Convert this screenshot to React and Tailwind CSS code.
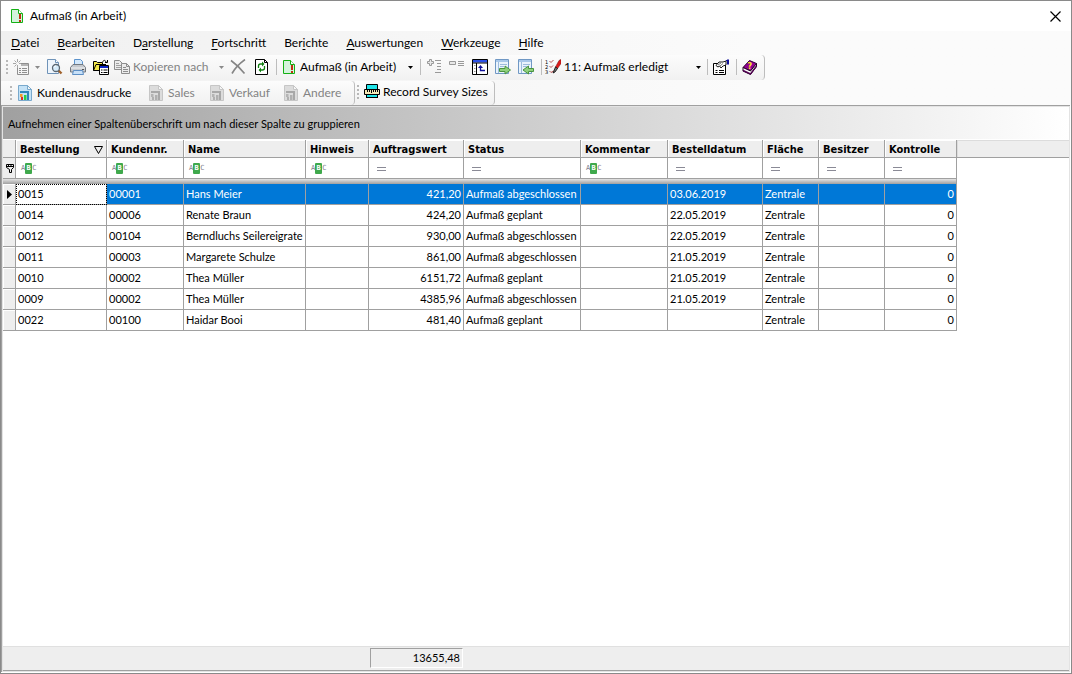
import { useState } from 'react';
import clsx from 'clsx';

const menus = [
  ['', 'D', 'atei'],
  ['', 'B', 'earbeiten'],
  ['D', 'a', 'rstellung'],
  ['', 'F', 'ortschritt'],
  ['Ber', 'i', 'chte'],
  ['', 'A', 'uswertungen'],
  ['', 'W', 'erkzeuge'],
  ['', 'H', 'ilfe'],
];

const columns = [
  { key: 'order', label: 'Bestellung', width: 'w-[91px]', filter: 'text', sorted: true },
  { key: 'customer', label: 'Kundennr.', width: 'w-[77px]', filter: 'text' },
  { key: 'name', label: 'Name', width: 'w-[122px]', filter: 'text' },
  { key: 'hint', label: 'Hinweis', width: 'w-[63px]', filter: 'text' },
  { key: 'value', label: 'Auftragswert', width: 'w-[95px]', filter: 'equal', right: true },
  { key: 'status', label: 'Status', width: 'w-[117px]', filter: 'equal' },
  { key: 'comment', label: 'Kommentar', width: 'w-[87px]', filter: 'text' },
  { key: 'date', label: 'Bestelldatum', width: 'w-[95px]', filter: 'equal' },
  { key: 'area', label: 'Fläche', width: 'w-[56px]', filter: 'equal' },
  { key: 'owner', label: 'Besitzer', width: 'w-[66px]', filter: 'equal' },
  { key: 'control', label: 'Kontrolle', width: 'w-[72px]', filter: 'equal', right: true },
];

const rows = [
  { order: '0015', customer: '00001', name: 'Hans Meier', value: '421,20', status: 'Aufmaß abgeschlossen', date: '03.06.2019', area: 'Zentrale', control: '0' },
  { order: '0014', customer: '00006', name: 'Renate Braun', value: '424,20', status: 'Aufmaß geplant', date: '22.05.2019', area: 'Zentrale', control: '0' },
  { order: '0012', customer: '00104', name: 'Berndluchs Seilereigrate', value: '930,00', status: 'Aufmaß abgeschlossen', date: '22.05.2019', area: 'Zentrale', control: '0' },
  { order: '0011', customer: '00003', name: 'Margarete Schulze', value: '861,00', status: 'Aufmaß abgeschlossen', date: '21.05.2019', area: 'Zentrale', control: '0' },
  { order: '0010', customer: '00002', name: 'Thea Müller', value: '6151,72', status: 'Aufmaß geplant', date: '21.05.2019', area: 'Zentrale', control: '0' },
  { order: '0009', customer: '00002', name: 'Thea Müller', value: '4385,96', status: 'Aufmaß abgeschlossen', date: '21.05.2019', area: 'Zentrale', control: '0' },
  { order: '0022', customer: '00100', name: 'Haidar Booi', value: '481,40', status: 'Aufmaß geplant', date: '', area: 'Zentrale', control: '0' },
];

function Icon({ children, className = 'size-4' }) {
  return (
    <svg viewBox="0 0 16 16" className={clsx('shrink-0', className)} fill="none" aria-hidden="true">
      {children}
    </svg>
  );
}

function PageIcon() {
  return (
    <Icon>
      <path d="M2.500 1.500h7l4 4v9h-11z" fill="#d4f3dc" stroke="#14b014" />
      <path d="M9.500 1.500v4h4" fill="#fff" stroke="#14b014" />
      <path d="M10 6h2v5h-2zM10 12h2v2h-2z" fill="#c03010" />
    </Icon>
  );
}

function NewIcon() {
  return (
    <Icon>
      <path d="M4.500 0v3M4.500 6v3M0 4.500h3M6 4.500h2M1.500 1.500l2 2M7.500 1.500l-2 2M1.500 7.500l2-2" stroke="#a6a6a6" />
      <path d="M8 4.500h7.500v11h-11V9" stroke="#8f8f8f" />
      <path d="M8 5h7v2H8z" fill="#b5b5b5" />
      <path d="M6 9.500h2M9 9.500h5M6 11.500h2M9 11.500h5M6 13.500h2M9 13.500h5" stroke="#8f8f8f" />
    </Icon>
  );
}

function PreviewIcon() {
  return (
    <Icon>
      <path d="M.5 .5h8l3 3v11H.5z" fill="#eef5fc" stroke="#6f93b8" />
      <path d="M8.500 .5v3h3" fill="#fff" stroke="#6f93b8" />
      <path d="M11.500 11.500l3 3" stroke="#a0622c" strokeWidth="2.4" />
      <circle cx="9" cy="9" r="3.500" fill="#d5ebfa" stroke="#5b6772" strokeWidth="1.3" />
      <path d="M7 8.500a2 2 0 0 1 2-1.6" stroke="#fff" />
    </Icon>
  );
}

function PrinterIcon() {
  return (
    <Icon>
      <path d="M4.500 6V.5h6l2 2V6" fill="#d3e8fb" stroke="#5c93cc" />
      <path d="M3 5.500h10l2.500 3v4.500H.5V8.500z" fill="#c5c9ce" stroke="#737980" />
      <path d="M1 9h14" stroke="#f4f5f6" />
      <path d="M3.500 11.500h9l1 4h-11z" fill="#c7e0f8" stroke="#5c8ec4" />
      <path d="M12 10.500h2" stroke="#555" />
    </Icon>
  );
}

function FolderListIcon() {
  return (
    <Icon>
      <path d="M9.500 2.500q2-2.500 4 .500M12 3.500h2.500V1" stroke="#000" />
      <path d="M.5 11.500v-9h3l1 1h5v2h3v6z" fill="#f4e84a" stroke="#000" />
      <path d="M.5 11.500l2.500-6h10" stroke="#000" />
      <path d="M6.500 6.500h9v9h-9z" fill="#fff" stroke="#000" />
      <path d="M7 7h8v2H7z" fill="#0a24c8" />
      <path d="M8 11h1.500M10.500 11h4M8 13.500h1.500M10.500 13.500h4" stroke="#000" />
    </Icon>
  );
}

function CopyIcon() {
  return (
    <Icon>
      <path d="M.5 1.500h5l3 3v6h-8z" fill="#ececec" stroke="#8d8d8d" />
      <path d="M2 4.500h3M2 6.500h5M2 8.500h5" stroke="#a0a0a0" />
      <path d="M7.500 4.500h5l3 3v7h-8z" fill="#ececec" stroke="#8d8d8d" />
      <path d="M12.500 4.500v3h3M9 8.500h3M9 10.500h5M9 12.500h5" stroke="#8d8d8d" />
    </Icon>
  );
}

function DeleteIcon() {
  return (
    <Icon>
      <path d="M1 1.500q7 5 13.500 13M15 .5Q6 7 2 14.500" stroke="#858585" strokeWidth="1.6" />
    </Icon>
  );
}

function RefreshIcon() {
  return (
    <Icon>
      <path d="M2.500 .5h9l3 3v12h-12z" fill="#fff" stroke="#000" />
      <path d="M11.500 .5v3h3" stroke="#000" />
      <path d="M5.500 9V7q0-2 2-2H10M11.500 7v2q0 2-2 2H7" stroke="#118011" strokeWidth="1.300" />
      <path d="M9 2.500L11.500 5 9 7.500zM8 8.500L5.500 11 8 13.500z" fill="#118011" />
    </Icon>
  );
}

function ExpandIcon() {
  return (
    <Icon>
      <path d="M3.500 .5h2v2h2v2h-2v2h-2v-2h-2v-2h2z" fill="#e8e8e8" stroke="#999" />
      <path d="M9 1.500h6M11 4.500h4M11 7.500h4M11 10.500h4M9 13.500h6" stroke="#999" />
    </Icon>
  );
}

function CollapseIcon() {
  return (
    <Icon>
      <path d="M.5 2.500h6v3h-6z" fill="#e8e8e8" stroke="#999" />
      <path d="M9 2.500h6M9 4.500h6M9 6.500h6" stroke="#999" />
    </Icon>
  );
}

function WindowUpIcon() {
  return (
    <Icon>
      <path d="M.5 .5h15v15H.5z" fill="#fff" stroke="#000" />
      <path d="M1 1h14v2.500H1z" fill="#2b50e8" />
      <path d="M0 4h16M4.500 4v11" stroke="#000" />
      <path d="M2 6.500h1.500M2 9.500h1.500M2 12.500h1.500" stroke="#999" />
      <path d="M8.500 8v3.500H13" stroke="#10109a" strokeWidth="1.300" />
      <path d="M6 9l2.500-3L11 9z" fill="#10109a" />
    </Icon>
  );
}

function TransferIcon({ back }) {
  return (
    <Icon>
      <path d="M.5 .5h13v14H.5z" fill="#eaf3fc" stroke="#7098c4" />
      <path d="M1 1h12v2H1z" fill="#a9c8ea" />
      <path d="M3.500 3v11" stroke="#9dbcdc" />
      <path d="M5 5.500h7M5 7.500h4" stroke="#9dbcdc" />
      {back ? (
        <path d="M15.500 9.500h-5V7l-5.500 4 5.500 4v-2.500h5z" fill="#8fd07c" stroke="#4a9440" />
      ) : (
        <path d="M4.500 9.500h5.500V7l5.500 4-5.500 4v-2.500H4.500z" fill="#8fd07c" stroke="#4a9440" />
      )}
    </Icon>
  );
}

function StepsIcon() {
  return (
    <Icon>
      <g fill="#000" fontFamily="DejaVu Sans" fontSize="5">
        <text x="0" y="5">1</text>
        <text x="0" y="10">2</text>
        <text x="0" y="15">3</text>
      </g>
      <path d="M4.500 2L6 3.500 8.500 1M4.500 7L6 8.500 8 6.500M4.500 12L6 13.500 8.500 12" stroke="#b04040" strokeWidth=".9" />
      <path d="M10.500 8L14 1.500 16 .5v4l-3.500 5z" fill="#e01818" stroke="#802020" strokeWidth=".6" />
      <path d="M10.500 8l2 1.500-2.500 3.500L8 14z" fill="#777" stroke="#000" strokeWidth=".8" />
    </Icon>
  );
}

function PropertiesIcon() {
  return (
    <Icon>
      <path d="M.5 4.500h12v11H.5z" fill="#fff" stroke="#000" />
      <path d="M2.500 11.500h2M6 11.500h5M2.500 13.500h2M6 13.500h5" stroke="#000" />
      <path d="M3 6.500L6 3h4l3-1v4l-3 1-2 2-1.500-2L5 8z" fill="#fff" stroke="#000" strokeWidth=".9" />
      <path d="M5 6l3-2M7 7l3-2.500" stroke="#555" strokeWidth=".8" />
      <path d="M14 .5h2v5h-2zM13 1h1v1h-1z" fill="#10109a" />
    </Icon>
  );
}

function BookIcon() {
  return (
    <Icon>
      <path d="M1 8.500L7.500 1.500l7 3-6 7.500z" fill="#900090" stroke="#300030" />
      <path d="M1 8.500v3.500l7.500 3.500 6-8V4.500l-6 7.500z" fill="#fff" stroke="#200020" />
      <path d="M1 11.500l7.500 3.500 6-8" stroke="#500050" strokeWidth="1.400" />
      <text x="5.500" y="9.500" fill="#ffea20" fontSize="8" fontWeight="bold" fontFamily="DejaVu Sans">?</text>
    </Icon>
  );
}

function ReportIcon({ disabled }) {
  return (
    <Icon>
      <path
        d="M1.500 .5h9l4 4v11h-13z"
        fill={disabled ? '#dcdcdc' : '#c4e2f6'}
        stroke={disabled ? '#c6c6c6' : '#79a9cc'}
      />
      <path d="M10.500 .5v4h4z" fill="#f6f6f6" stroke={disabled ? '#c6c6c6' : '#79a9cc'} />
      <path d="M3 8V6h9v9h-2V8z" fill={disabled ? '#a8a8a8' : '#2e86bd'} />
      <path d="M3 9h2.500v3H3z" fill={disabled ? '#b4b4b4' : '#f29a28'} />
      <path d="M4 12h2v3H4z" fill={disabled ? '#b0b0b0' : '#e03020'} />
      <path d="M7 10h2.500v5H7z" fill={disabled ? '#b0b0b0' : '#28d048'} />
    </Icon>
  );
}

function RulerIcon() {
  return (
    <Icon>
      <path d="M2.500 .5h11v5h-11zM2.500 10.500h11v3h-11z" fill="#20e4e8" stroke="#000" />
      <path d="M.5 5.500h15v5H.5z" fill="#f5e9b8" stroke="#000" />
      <path d="M3.500 6v2M5.500 6v2M7.500 6v3M9.500 6v2M11.500 6v2M13.500 6v2" stroke="#000" />
      <path d="M2 13.500h12" stroke="#000" />
    </Icon>
  );
}

function Arrow({ muted }) {
  return (
    <svg viewBox="0 0 5 3" className="h-[3px] w-[5px] shrink-0" aria-hidden="true">
      <path d="M0 0h5L2.500 3z" fill={muted ? '#8a8a8a' : '#000'} />
    </svg>
  );
}

function Grip() {
  return (
    <span className="flex w-2 shrink-0 flex-col gap-0.5 pl-px" aria-hidden="true">
      <span className="size-0.5 bg-[#b8b8b8]" />
      <span className="size-0.5 bg-[#b8b8b8]" />
      <span className="size-0.5 bg-[#b8b8b8]" />
      <span className="size-0.5 bg-[#b8b8b8]" />
    </span>
  );
}

function Separator() {
  return <span className="ml-1 mr-px h-4 w-px shrink-0 bg-[#bdbdbd]" />;
}

function ToolButton({ label, disabled, children }) {
  return (
    <button
      type="button"
      aria-label={label}
      disabled={disabled}
      className="flex h-6 w-[23px] shrink-0 items-center justify-center"
    >
      {children}
    </button>
  );
}

function ToolSelect({ icon, label, options, className }) {
  return (
    <label className={clsx('flex h-6 shrink-0 items-center', className)}>
      {icon}
      <select aria-label={label} className="ml-[3px] min-w-0 flex-1 appearance-none bg-transparent outline-none">
        {options.map((option) => (
          <option key={option}>{option}</option>
        ))}
      </select>
      <Arrow />
    </label>
  );
}

function ReportButton({ label, disabled, className }) {
  return (
    <button
      type="button"
      disabled={disabled}
      className={clsx('flex h-6 shrink-0 items-center gap-1 disabled:text-[#838383]', className)}
    >
      <ReportIcon disabled={disabled} />
      {label}
    </button>
  );
}

function FilterCell({ column }) {
  return (
    <label className="flex h-5 items-center overflow-hidden pl-[5px] pt-px">
      {column.filter === 'text' ? (
        <span className="flex items-center font-['DejaVu_Sans_Mono'] text-[7px] leading-[11px] text-[#7d7d8a]">
          A<span className="w-[7px] rounded-[1px] bg-[#3fa94c] text-center font-bold text-white">B</span>C
        </span>
      ) : (
        <span className="ml-[3px] h-1 w-[9px] shrink-0 border-y border-[#8a8a96]" />
      )}
      <input
        type="text"
        aria-label={`Filter ${column.label}`}
        className="ml-1 min-w-0 flex-1 bg-transparent outline-none"
      />
    </label>
  );
}

function OrderTable() {
  const [selected, setSelected] = useState('0015');

  return (
    <table className="w-full table-fixed border-separate border-spacing-0 text-left">
      <colgroup>
        <col className="w-[13px]" />
        {columns.map((column) => (
          <col key={column.key} className={column.width} />
        ))}
        <col />
      </colgroup>
      <thead>
        <tr className="h-[18px] bg-[#eee]">
          <th className="border-b border-r border-[#a0a0a0] p-0" />
          {columns.map((column) => (
            <th
              key={column.key}
              className="border-b border-r border-[#a0a0a0] p-0 font-['DejaVu_Sans_Condensed','DejaVu_Sans',sans-serif] font-bold shadow-[inset_1px_1px_0_#fff]"
            >
              <span className="flex items-center justify-between pl-1 pr-[3px] pt-0.5 leading-[15px]">
                {column.label}
                {column.sorted && (
                  <svg viewBox="0 0 9 8" className="h-2 w-[9px]" fill="none" aria-hidden="true">
                    <path d="M.5 .5h8l-4 7z" stroke="#000" />
                  </svg>
                )}
              </span>
            </th>
          ))}
          <th className="border-b border-[#a0a0a0] p-0 shadow-[inset_1px_1px_0_#dcdcdc]" />
        </tr>
        <tr className="h-[21px]">
          <td className="border-b border-r border-[#a0a0a0] bg-[#eee] p-0">
            <svg viewBox="0 0 9 9" className="ml-[3px] h-[9px] w-[9px]" fill="none" aria-hidden="true">
              <path d="M.5 .5h7v3l-2 2v3h-2v-3l-3-2zM1 2.500h6M2.500 .5v2M5 .5v2" stroke="#000" />
            </svg>
          </td>
          {columns.map((column) => (
            <td key={column.key} className="border-b border-r border-[#a0a0a0] p-0">
              <FilterCell column={column} />
            </td>
          ))}
          <td className="p-0" />
        </tr>
        <tr className="h-[5px]">
          <td
            colSpan={columns.length + 1}
            className="border-r border-[#a0a0a0] bg-linear-to-b from-[#e4e4e4] to-[#a0a0a0] p-0"
          />
          <td className="p-0" />
        </tr>
      </thead>
      <tbody>
        {rows.map((row) => {
          const active = row.order === selected;
          return (
            <tr
              key={row.order}
              onClick={() => setSelected(row.order)}
              className={clsx('h-[21px]', active && 'text-white')}
            >
              <td className="border-b border-r border-[#a0a0a0] bg-[#eee] p-0 shadow-[inset_1px_1px_0_#fff]">
                {active && (
                  <svg viewBox="0 0 5 9" className="ml-1 h-[9px] w-[5px] text-black" aria-hidden="true">
                    <path d="M0 0l5 4.500L0 9z" fill="currentColor" />
                  </svg>
                )}
              </td>
              {columns.map((column, i) => (
                <td
                  key={column.key}
                  className={clsx(
                    'whitespace-nowrap border-b border-r border-[#a0a0a0] p-0 leading-5',
                    column.right ? 'pr-0.5 text-right' : 'pl-0.5',
                    active && i > 0 && 'bg-[#0078d7]',
                    active && i === 0 && 'text-black outline-1 -outline-offset-1 outline-dotted outline-black',
                  )}
                >
                  {row[column.key]}
                </td>
              ))}
              <td className="p-0" />
            </tr>
          );
        })}
      </tbody>
    </table>
  );
}

export default function App() {
  return (
    <div className="flex h-screen flex-col overflow-hidden border border-[#8a8a8a] bg-white font-['Lato','Open_Sans',sans-serif] text-[12px] text-black">
      <header className="flex h-[30px] shrink-0 items-center justify-between pl-2 pr-2.5">
        <h1 className="flex items-center gap-[5px]">
          <PageIcon />
          Aufmaß (in Arbeit)
        </h1>
        <button type="button" aria-label="Schließen">
          <svg viewBox="0 0 11 11" className="size-[11px]" aria-hidden="true">
            <path d="M.5 .5l10 10M10.500 .5l-10 10" stroke="#000" strokeWidth="1.200" />
          </svg>
        </button>
      </header>

      <div className="shrink-0 bg-linear-to-r from-[#f0f0f0] to-[#fbfbfb] to-70%">
        <nav className="flex h-6 items-center pl-px">
          {menus.map(([before, letter, after]) => (
            <button key={before + letter + after} type="button" className="px-[9px]">
              {before}
              <span className="underline underline-offset-2">{letter}</span>
              {after}
            </button>
          ))}
        </nav>

        <div role="toolbar" aria-label="Standard" className="flex h-[25px] w-fit items-center rounded-r-sm border-r border-[#bdbdbd] bg-linear-to-b from-[#fcfcfc] to-[#f1f1f1] pb-px pl-1 pr-[3px]">
          <Grip />
          <button type="button" disabled aria-label="Neu" className="flex w-[30px] items-center gap-1.5">
            <NewIcon />
            <Arrow muted />
          </button>
          <ToolButton label="Vorschau"><PreviewIcon /></ToolButton>
          <ToolButton label="Drucken"><PrinterIcon /></ToolButton>
          <ToolButton label="Öffnen"><FolderListIcon /></ToolButton>
          <button type="button" disabled className="flex w-[114px] shrink-0 items-center gap-[3px] px-0.5 text-[#838383]">
            <CopyIcon />
            <span className="flex-1 whitespace-nowrap text-left">Kopieren nach</span>
            <Arrow muted />
          </button>
          <ToolButton label="Löschen" disabled><DeleteIcon /></ToolButton>
          <ToolButton label="Aktualisieren"><RefreshIcon /></ToolButton>
          <Separator />
          <ToolSelect
            icon={<PageIcon />}
            label="Ansicht"
            options={['Aufmaß (in Arbeit)']}
            className="w-[138px] px-[3px]"
          />
          <Separator />
          <ToolButton label="Alle erweitern" disabled><ExpandIcon /></ToolButton>
          <ToolButton label="Alle reduzieren" disabled><CollapseIcon /></ToolButton>
          <ToolButton label="Gruppieren"><WindowUpIcon /></ToolButton>
          <ToolButton label="Exportieren"><TransferIcon /></ToolButton>
          <ToolButton label="Importieren"><TransferIcon back /></ToolButton>
          <Separator />
          <ToolSelect
            icon={<StepsIcon />}
            label="Fortschritt"
            options={['11: Aufmaß erledigt']}
            className="w-[160px] px-0.5"
          />
          <Separator />
          <ToolButton label="Eigenschaften"><PropertiesIcon /></ToolButton>
          <Separator />
          <ToolButton label="Hilfe"><BookIcon /></ToolButton>
        </div>

        <div className="flex h-[25px] items-center">
          <div role="toolbar" aria-label="Ausdrucke" className="flex h-6 items-center rounded-r-sm border-r border-[#bdbdbd] bg-linear-to-b from-[#fcfcfc] to-[#f1f1f1] pl-2">
            <Grip />
            <ReportButton label="Kundenausdrucke" className="w-[131px]" />
            <ReportButton label="Sales" disabled className="w-[61px]" />
            <ReportButton label="Verkauf" disabled className="w-[74px]" />
            <ReportButton label="Andere" disabled className="w-[71px]" />
          </div>
          <div role="toolbar" aria-label="Aufmaß" className="flex h-6 items-center rounded-r-sm border-r border-[#bdbdbd] bg-linear-to-b from-[#fcfcfc] to-[#f1f1f1] pb-px pl-px">
            <Grip />
            <button type="button" className="flex w-[130px] items-center gap-[3px] whitespace-nowrap">
              <RulerIcon />
              Record Survey Sizes
            </button>
          </div>
        </div>
      </div>

      <main className="mb-px mr-px flex min-h-0 flex-1 flex-col border-l border-t border-[#a0a0a0] text-[11px]">
        <div className="flex min-h-0 flex-1 flex-col border border-[#e3e3e3]">
          <p className="h-8 shrink-0 bg-linear-to-r from-[#a0a0a0] to-white pl-[5px] leading-[34px]">
            Aufnehmen einer Spaltenüberschrift um nach dieser Spalte zu gruppieren
          </p>
          <div className="min-h-0 flex-1 overflow-hidden border-t border-white">
            <OrderTable />
          </div>
          <footer className="flex h-[25px] shrink-0 items-start border-b border-t border-b-[#a0a0a0] border-t-[#e0e0e0] bg-[#eee] pl-[367px] pt-px">
            <output
              aria-label="Summe Auftragswert"
              className="h-5 w-[93px] border border-b-white border-l-[#a0a0a0] border-r-white border-t-[#a0a0a0] pr-0.5 text-right leading-[18px]"
            >
              13655,48
            </output>
          </footer>
        </div>
      </main>
    </div>
  );
}
